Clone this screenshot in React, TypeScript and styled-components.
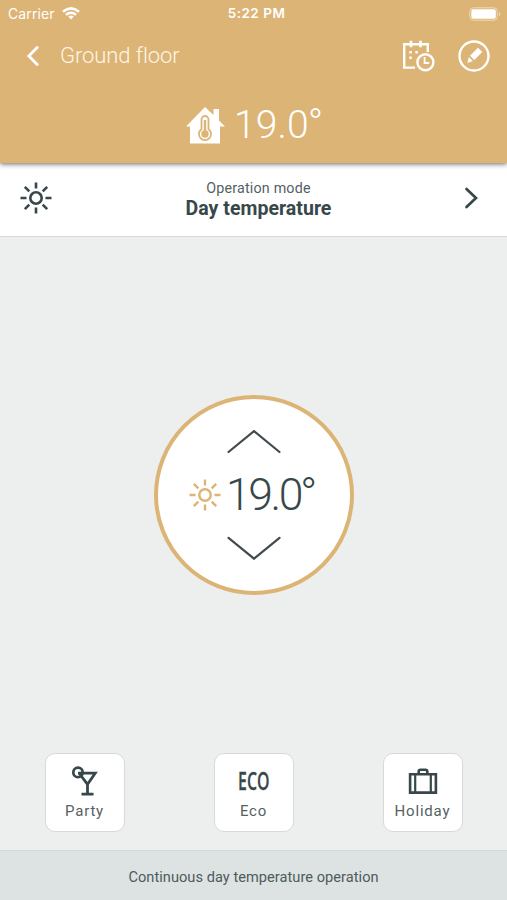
import React from "react";
import styled, { createGlobalStyle } from "styled-components";

const GlobalStyle = createGlobalStyle`
  * { box-sizing: border-box; }
  body { margin: 0; background: #ecefee; font-family: Roboto, "Liberation Sans", sans-serif; }
  svg { display: block; flex: none; }
  button { font: inherit; color: inherit; border: 0; background: none; padding: 0; margin: 0; }
`;

const gold = "#dcb475";
const ink = "#37474a";

const Screen = styled.div`
  width: 507px;
  height: 900px;
  display: flex;
  flex-direction: column;
  overflow: hidden;
  background: #ecefee;
  color: ${ink};
`;

const Header = styled.header`
  height: 163px;
  flex: none;
  background: ${gold};
  color: #fff;
  box-shadow: 0 1px 5px rgba(50, 50, 65, 0.75);
  z-index: 1;
`;

const StatusBar = styled.div`
  height: 27px;
  display: grid;
  grid-template-columns: 1fr auto 1fr;
  align-items: center;
  padding: 0 6px 0 8px;
  font: 400 14px/27px Inter, "Liberation Sans", sans-serif;
`;

const Carrier = styled.div`
  display: flex;
  align-items: center;
  gap: 7px;
  letter-spacing: 0.12px;
`;

const Clock = styled.div`
  font-weight: 600;
  font-size: 13.5px;
  letter-spacing: 0.5px;
  padding-left: 4px;
`;

const BatterySlot = styled.div`
  justify-self: end;
`;

const NavBar = styled.nav`
  height: 57px;
  display: flex;
  align-items: center;
  padding: 0 17px 0 25px;
`;

const PageTitle = styled.h1`
  margin: 0 auto 0 18px;
  font-size: 22px;
  line-height: 57px;
  font-weight: 300;
  letter-spacing: -0.08px;
  color: #fff6e8;
`;

const NavButton = styled.button`
  display: flex;
  & + & { margin-left: 23px; }
`;

const RoomTemperature = styled.div`
  height: 79px;
  display: flex;
  align-items: center;
  padding: 2px 0 0 186px;
  gap: 9px;
`;

const HouseSlot = styled.span`
  padding-top: 2px;
`;

const Degrees = styled.span<{ $large?: boolean }>`
  font-size: ${(p) => (p.$large ? 44.5 : 39)}px;
  line-height: 52px;
  font-weight: 300;
  letter-spacing: ${(p) => (p.$large ? -2.4 : 0.1)}px;
`;

const DegreeSign = styled.span<{ $large?: boolean }>`
  font-size: ${(p) => (p.$large ? 46 : 41)}px;
  line-height: 1;
  margin-left: -1px;
`;

const ModeRow = styled.button`
  height: 74px;
  flex: none;
  display: grid;
  grid-template-columns: 32px 1fr 32px;
  align-items: center;
  padding: 0 20px 3px;
  background: #fff;
  border-bottom: 1px solid #d6dad9;
`;

const ModeText = styled.div`
  display: flex;
  flex-direction: column;
  align-items: center;
  padding: 4px 0 0 10px;
`;

const ModeLabel = styled.span`
  font-size: 14.3px;
  line-height: 17px;
  letter-spacing: 0.18px;
  color: #566163;
`;

const ModeValue = styled.strong`
  font-size: 19.5px;
  line-height: 24px;
  font-weight: 700;
  letter-spacing: 0.03px;
`;

const Main = styled.main`
  height: 516px;
  flex: none;
  display: flex;
  justify-content: center;
  align-items: center;
`;

const Dial = styled.section`
  width: 200px;
  height: 200px;
  border: 4px solid ${gold};
  border-radius: 50%;
  background: #fff;
  display: flex;
  flex-direction: column;
  align-items: center;
  justify-content: center;
`;

const StepButton = styled.button`
  display: block;
`;

const Setpoint = styled.div`
  height: 82px;
  display: flex;
  align-items: center;
  gap: 5px;
  padding-right: 3px;
`;

const Shortcuts = styled.div`
  height: 97px;
  flex: none;
  display: flex;
  justify-content: space-between;
  align-items: flex-start;
  padding: 0 44px 0 45px;
`;

const ShortcutButton = styled.button`
  width: 80px;
  height: 79px;
  display: flex;
  flex-direction: column;
  align-items: center;
  padding: 11px 1px 0 0;
  background: #fff;
  border: 1px solid #d6dad9;
  border-radius: 10px;
`;

const ShortcutLabel = styled.span`
  margin-top: 4px;
  font-size: 15px;
  line-height: 20px;
  letter-spacing: 0.8px;
  color: #566163;
`;

const EcoMark = styled.span`
  height: 32px;
  font: 600 26px/31px "Open Sans", sans-serif;
  -webkit-text-stroke: 0.3px ${ink};
  transform: scaleX(0.61);
`;

const Footer = styled.footer`
  height: 51px;
  flex: none;
  border-top: 1px solid #d3dad9;
  background: #dce3e2;
  text-align: center;
  font-size: 14.6px;
  line-height: 53px;
  letter-spacing: 0.04px;
  color: #4e5b5c;
`;

const SunIcon = ({ color, width }: { color: string; width: number }) => (
  <svg width="32" height="32" viewBox="0 0 32 32" fill="none" stroke={color} strokeWidth={width}>
    <circle cx="16" cy="16" r="5.7" />
    <path d="M16 .5v6M16 25.5v6M.5 16h6M25.5 16h6M4.8 4.8l4.5 4.5M22.7 22.7l4.5 4.5M4.8 27.2l4.5-4.5M22.7 9.3l4.5-4.5" />
  </svg>
);

const WifiIcon = () => (
  <svg width="18" height="13" viewBox="0 0 18 13" fill="none" stroke="#fff" strokeWidth="2.5">
    <path d="M1 4.7Q9-2 17 4.7M4 7.9Q9 3.7 14 7.9" />
    <path d="M6.2 9.6Q9 7.5 11.8 9.6L9 12.5z" fill="#fff" stroke="none" />
  </svg>
);

const BatteryIcon = () => (
  <svg width="32" height="14" viewBox="0 0 32 14">
    <rect x=".8" y=".8" width="27.5" height="12.4" rx="3.5" fill="none" stroke="#efd9b8" />
    <rect x="2.3" y="2.3" width="24.5" height="9.4" rx="1.8" fill="#fff" />
    <path d="M30 4.5q2.5 2.5 0 5z" fill="#efd9b8" />
  </svg>
);

const CalendarIcon = () => (
  <svg width="33" height="32" viewBox="0 0 33 32" fill="none" stroke="#fff" strokeWidth="2.4">
    <path d="M13 27.6H2.2V4.2h23.6V12" />
    <path d="M9 .7v6.5M18.5.7v6.5" strokeWidth="2.6" />
    <path d="M7.3 12.2h2.5M13.3 12.2h2.5M7.3 17.7h2.5" strokeWidth="2.4" />
    <circle cx="23.4" cy="22.2" r="8" />
    <path d="M22.6 17v6h4.6" strokeWidth="1.8" />
  </svg>
);

const EditIcon = () => (
  <svg width="32" height="32" viewBox="0 0 32 32">
    <circle cx="16" cy="16" r="14.5" fill="none" stroke="#fff" strokeWidth="2.4" />
    <path d="M20 7.8l4.3 4.3-8 8-4.3-4.3zM10.8 17l4.1 4.1-5.5 1.8z" fill="#fff" />
  </svg>
);

const HouseIcon = () => (
  <svg width="39" height="37" viewBox="0 0 39 37">
    <path d="M0 19.5L19 0l8.5 8V2H33v11.5l6 6h-5V36.5H4V19.5z" fill="#fff" />
    <path d="M15.5 22.2V12.5a3.5 3.5 0 0 1 7 0v9.7a6 6 0 1 1-7 0z" fill="none" stroke={gold} strokeWidth="1.8" />
    <path d="M19 13V27" stroke={gold} strokeWidth="2.4" />
    <circle cx="19" cy="27" r="3.7" fill={gold} />
  </svg>
);

const DialArrow = ({ down = false }: { down?: boolean }) => (
  <svg width="54" height="24" viewBox="0 0 54 24" fill="none" stroke="#424b4e" strokeWidth="2.2" strokeLinecap="round">
    <path d={down ? "M1.5 1.8L27 22.7L52.5 1.8" : "M1.5 22L27 1.1L52.5 22"} />
  </svg>
);

const PartyIcon = () => (
  <svg width="28" height="32" viewBox="0 0 28 32" fill="none" stroke={ink} strokeWidth="2.8">
    <path d="M7 8.2H24.2L16.5 19.3L8 8M16.5 18V29M10.5 29.2H22.5" />
    <circle cx="7" cy="7.4" r="4.7" strokeWidth="2.7" />
  </svg>
);

const HolidayIcon = () => (
  <svg width="30" height="32" viewBox="0 0 30 32" fill="none" stroke={ink} strokeWidth="2.6">
    <path d="M2.1 9.3h25.8V27.6H2.1z" />
    <path d="M7.2 9v18.5M22.8 9v18.5" strokeWidth="2.2" />
    <path d="M10.7 9V6.5q0-1.8 1.8-1.8h5q1.8 0 1.8 1.8V9" />
  </svg>
);

export default function App() {
  return (
    <>
      <GlobalStyle />
      <Screen>
        <Header>
          <StatusBar>
            <Carrier>Carrier <WifiIcon /></Carrier>
            <Clock>5:22 PM</Clock>
            <BatterySlot><BatteryIcon /></BatterySlot>
          </StatusBar>
          <NavBar>
            <NavButton aria-label="Back">
              <svg width="17" height="22" viewBox="0 0 17 22" fill="none" stroke="#fff" strokeWidth="2.8" strokeLinecap="round">
                <path d="M12.2 2.6L3.8 11l8.4 8.4" />
              </svg>
            </NavButton>
            <PageTitle>Ground floor</PageTitle>
            <NavButton aria-label="Schedule"><CalendarIcon /></NavButton>
            <NavButton aria-label="Edit"><EditIcon /></NavButton>
          </NavBar>
          <RoomTemperature>
            <HouseSlot><HouseIcon /></HouseSlot>
            <Degrees>19.0<DegreeSign>°</DegreeSign></Degrees>
          </RoomTemperature>
        </Header>
        <ModeRow>
          <SunIcon color={ink} width={2.6} />
          <ModeText>
            <ModeLabel>Operation mode</ModeLabel>
            <ModeValue>Day temperature</ModeValue>
          </ModeText>
          <svg width="32" height="24" viewBox="0 0 32 24" fill="none" stroke={ink} strokeWidth="2.7" strokeLinecap="round">
            <path d="M11.5 3l9.5 9-9.5 9" />
          </svg>
        </ModeRow>
        <Main>
          <Dial>
            <StepButton aria-label="Increase"><DialArrow /></StepButton>
            <Setpoint>
              <SunIcon color={gold} width={2.4} />
              <Degrees $large>19.0<DegreeSign $large>°</DegreeSign></Degrees>
            </Setpoint>
            <StepButton aria-label="Decrease"><DialArrow down /></StepButton>
          </Dial>
        </Main>
        <Shortcuts>
          <ShortcutButton><PartyIcon /><ShortcutLabel>Party</ShortcutLabel></ShortcutButton>
          <ShortcutButton><EcoMark>ECO</EcoMark><ShortcutLabel>Eco</ShortcutLabel></ShortcutButton>
          <ShortcutButton><HolidayIcon /><ShortcutLabel>Holiday</ShortcutLabel></ShortcutButton>
        </Shortcuts>
        <Footer>Continuous day temperature operation</Footer>
      </Screen>
    </>
  );
}
